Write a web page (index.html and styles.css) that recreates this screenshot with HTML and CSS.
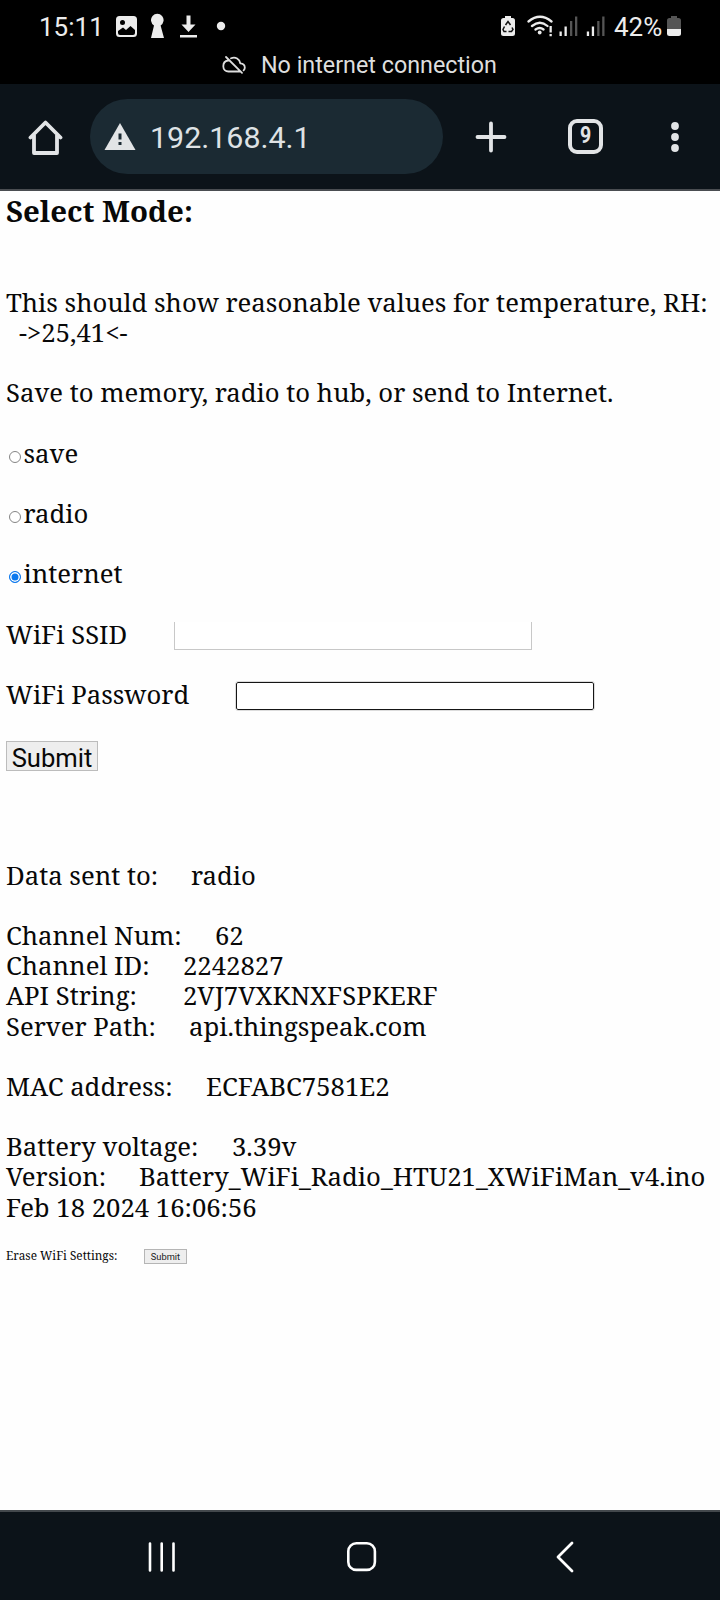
FILE: index.html
```html
<!DOCTYPE html>
<html lang="en">
<head>
<meta charset="utf-8">
<title>Select Mode</title>
<link rel="stylesheet" href="styles.css">
</head>
<body>
<header class="status">
  <div class="status-row">
    <span class="clock">15:11</span>
    <svg class="ic-left" width="112" height="30" viewBox="114 11 112 30" fill="#ececec">
      <path fill-rule="evenodd" d="M119.500 16h14a3.500 3.500 0 0 1 3.500 3.500v14a3.500 3.500 0 0 1-3.500 3.500h-14a3.500 3.500 0 0 1-3.500-3.500v-14a3.500 3.500 0 0 1 3.500-3.500zM118 31v2q0 2 2 2h13q2 0 2-2v-3l-4.500-4-4.500 4-3-2.500z"/>
      <circle cx="122.500" cy="22.500" r="2.500" fill="#000"/>
      <path d="M154 25.500a6.300 6.300 0 1 1 6.600 0L164 38h-13z"/>
      <path d="M186.500 15.500h4v9h5L188.500 32l-7-7.500h5zM180 35h17v2.600h-17z"/>
      <circle cx="221" cy="26" r="4.200"/>
    </svg>
    <svg class="ic-right" width="106" height="30" viewBox="500 11 106 30" fill="#ececec">
      <path d="M505 18v-2h6v2h1.500q2.500 0 2.500 2.500v13q0 2.500-2.500 2.500h-9q-2.500 0-2.500-2.500v-13q0-2.500 2.500-2.500z"/>
      <path d="M505.500 25l2.500-3.500 2.500 3.500M512 27.500l1 2-1.500 2h-3M506.500 31.500H504l-1-2 1.500-3" fill="none" stroke="#111" stroke-width="1.500"/>
      <g fill="none" stroke="#ececec" stroke-width="2.300" stroke-linecap="round">
        <path d="M528.500 21.500q11.500-9.500 23 0M532 26q8-6.500 15.500 0M535.500 29.500q4.300-3 8 0"/>
      </g>
      <circle cx="539.700" cy="32.500" r="1.900"/>
      <path d="M549.500 26h2.300v6.500h-2.300zM549.500 34h2.300v2.300h-2.300zM559.500 31.500h2.300V36h-2.300zM564.500 26.500h2.300V36h-2.300zM586.800 31.500h2.300V36h-2.300zM591.800 26.500h2.300V36h-2.300z"/>
      <path fill="#555" d="M570 21h2.300v15H570zM575 16.500h2.300V36H575zM597.200 21h2.300v15h-2.300zM602.200 16.500h2.300V36h-2.300z"/>
    </svg>
    <span class="percent">42%</span>
    <svg class="ic-batt" width="14" height="30" viewBox="667 11 14 30">
      <path fill="#555" d="M671 18v-2h6v2h1.500q2.500 0 2.500 2.500V29h-14v-8.500q0-2.500 2.500-2.500z"/>
      <path fill="#ececec" d="M667 29h14v4.500q0 2.500-2.500 2.500h-9q-2.500 0-2.500-2.500z"/>
    </svg>
  </div>
  <div class="offline">
    <svg width="24" height="20" viewBox="0 0 24 20" fill="none" stroke="#dedede" stroke-width="1.800" stroke-linecap="round" stroke-linejoin="round">
      <path d="M6 5.500C3 6 1.300 8.300 1.300 11.200 1.300 14.500 3.600 16.500 6.500 16.500h11.200M9 3.300c4.500-2 8.700.8 9.300 5 3 .2 4.500 2 4.500 4.400 0 1-.5 2-1.200 2.700M4 2l16 15.800"/>
    </svg>
    <span class="offline-text">No internet connection</span>
  </div>
</header>
<nav class="toolbar">
  <svg class="home" width="36" height="38" viewBox="27 117 36 38" fill="none" stroke="#e2e4e6" stroke-width="3.800" stroke-linejoin="round" stroke-linecap="round">
    <path d="M30.500 136.500L45.500 121.500l15 15M34 134v18h23v-18"/>
  </svg>
  <div class="address">
    <svg width="32" height="28" viewBox="0 0 32 28"><path fill="#e2e4e6" d="M16 0l15.500 27H.5z"/><path fill="#1b2a33" d="M14.500 10.500h3v6h-3zM14.500 19h3v3h-3z"/></svg>
    <span class="url">192.168.4.1</span>
  </div>
  <svg class="plus" width="32" height="32" viewBox="0 0 32 32" stroke="#e2e4e6" stroke-width="3.800" stroke-linecap="round"><path d="M16 2.500v27M2.500 16h27"/></svg>
  <div class="tabs"><span class="count">9</span></div>
  <svg class="more" width="10" height="34" viewBox="0 0 10 34" fill="#e2e4e6"><circle cx="5" cy="6" r="3.900"/><circle cx="5" cy="17" r="3.900"/><circle cx="5" cy="28" r="3.900"/></svg>
</nav>
<main class="page">
  <h1 class="title">Select Mode:</h1>
  <div class="lines">
    <div class="row"><span>This should show reasonable values for temperature, RH:</span></div>
    <div class="row reading"><span>-&gt;25,41&lt;-</span></div>
    <div class="row"></div>
    <div class="row"><span>Save to memory, radio to hub, or send to Internet.</span></div>
    <div class="row"></div>
    <label class="row"><i class="radio"></i><span>save</span></label>
    <div class="row"></div>
    <label class="row"><i class="radio"></i><span>radio</span></label>
    <div class="row"></div>
    <label class="row"><i class="radio on"></i><span>internet</span></label>
    <div class="row"></div>
    <label class="row"><span class="label w-ssid">WiFi SSID</span><i class="field open"></i></label>
    <div class="row"></div>
    <label class="row"><span class="label w-pass">WiFi Password</span><i class="field focus"></i></label>
    <div class="row"></div>
    <div class="row"><button class="submit">Submit</button></div>
    <div class="row"></div>
    <div class="row"></div>
    <div class="row"></div>
    <div class="row"><span class="label w-sent">Data sent to:</span><span>radio</span></div>
    <div class="row"></div>
    <div class="row"><span class="label w-num">Channel Num:</span><span>62</span></div>
    <div class="row"><span class="label w-id">Channel ID:</span><span>2242827</span></div>
    <div class="row"><span class="label w-api">API String:</span><span>2VJ7VXKNXFSPKERF</span></div>
    <div class="row"><span class="label w-path">Server Path:</span><span>api.thingspeak.com</span></div>
    <div class="row"></div>
    <div class="row"><span class="label w-mac">MAC address:</span><span>ECFABC7581E2</span></div>
    <div class="row"></div>
    <div class="row"><span class="label w-volt">Battery voltage:</span><span>3.39v</span></div>
    <div class="row"><span class="label w-ver">Version:</span><span>Battery_WiFi_Radio_HTU21_XWiFiMan_v4.ino</span></div>
    <div class="row"><span>Feb 18 2024 16:06:56</span></div>
  </div>
  <div class="erase"><span class="label w-erase">Erase WiFi Settings:</span><button class="submit small">Submit</button></div>
</main>
<footer class="navbar">
  <svg width="30" height="32" viewBox="0 0 30 32" stroke="#fff" stroke-width="2.600" stroke-linecap="round"><path d="M3 2.500v27M14.700 2.500v27M26.500 2.500v27"/></svg>
  <svg width="32" height="32" viewBox="0 0 32 32" fill="none" stroke="#fff" stroke-width="2.600"><rect x="2.300" y="2.300" width="26.600" height="26.600" rx="8"/></svg>
  <svg width="20" height="34" viewBox="0 0 20 34" fill="none" stroke="#fff" stroke-width="2.800" stroke-linecap="round" stroke-linejoin="round"><path d="M17 3L3 17l14 14"/></svg>
</footer>
</body>
</html>
```
FILE: styles.css
```css
* { box-sizing: border-box; }
body { margin: 0; width: 720px; height: 1600px; display: flex; flex-direction: column; background: #fefefe; font-family: "Noto Serif", "DejaVu Serif Condensed", serif; color: #080808; overflow: hidden; }
svg { display: block; flex: none; }
span { white-space: pre; }
.status { height: 84px; background: #000; color: #ececec; font-family: Roboto, sans-serif; }
.status-row { display: flex; align-items: center; height: 52px; padding-left: 39px; }
.clock { width: 75px; padding-top: 2px; font-size: 26px; }
.ic-right { margin-left: 274px; }
.percent { width: 53px; margin-left: 8px; padding-top: 2px; font-size: 26px; }
.offline { display: flex; align-items: center; height: 26px; padding-left: 222px; gap: 15px; font-size: 23.3px; color: #dedede; }
.toolbar { height: 107px; display: flex; align-items: center; padding: 0 38px 0 27px; background: #0c1319; border-bottom: 2px solid #4a4d51; }
.address { display: flex; align-items: center; width: 353px; height: 75px; margin-left: 27px; padding-left: 14px; gap: 14px; border-radius: 38px; background: #1b2a33; font-family: Roboto, sans-serif; font-size: 30.4px; color: #dfe2e5; }
.url { padding-top: 2px; }
.plus { margin-left: 32px; }
.tabs { display: flex; justify-content: center; width: 35px; height: 35px; margin-left: 61px; border: 4px solid #e2e4e6; border-radius: 9px; font: bold 23px/26px Roboto, sans-serif; color: #e2e4e6; }
.count { transform: scaleX(0.85); }
.more { margin-left: 67px; }
.page { height: 1319px; padding-left: 6px; font-size: 25.7px; }
.title { height: 97px; margin: 0; font-size: 29.4px; line-height: 40px; }
.row { display: flex; align-items: center; height: 30.16px; line-height: 30.16px; }
.row span { padding-bottom: 0.3px; }
.reading { padding-left: 13px; }
.radio { flex: none; width: 12px; height: 12px; margin: 6px 2.500px 0 3px; border: 1px solid #858585; border-radius: 50%; background: #fff; }
.on { border-color: #0b78ee; background: #0b78ee; box-shadow: inset 0 0 0 1.5px #fff; }
.label { flex: none; }
.w-ssid { width: 168px; }
.w-pass { width: 230px; }
.field { width: 358px; height: 28px; margin-top: 2px; border: 1px solid #c8c8c8; background: #fff; }
.open { border-top: 0; }
.focus { border: 1px solid #151515; outline: 1px solid #dcdcdc; border-radius: 2px; }
.submit { width: 92px; height: 30px; margin-top: 2px; padding: 2px 0 0; border: 1px solid #bcbcbc; border-radius: 0; background: #eee; color: #080808; font: 25.6px/28px Roboto, sans-serif; }
.w-sent { width: 185px; }
.w-num { width: 209px; }
.w-id { width: 177px; }
.w-api { width: 177px; }
.w-path { width: 183px; }
.w-mac { width: 200px; }
.w-volt { width: 226px; }
.w-ver { width: 133px; }
.erase { display: flex; align-items: center; height: 16px; margin-top: 25px; font-size: 11.8px; line-height: 14px; }
.w-erase { width: 138px; padding-bottom: 2px; }
.small { width: 43px; height: 15px; padding-top: 0; border-color: #b5b5b5; font-size: 9.3px; line-height: 13px; color: #222; }
.navbar { height: 90px; display: flex; align-items: center; border-top: 2px solid #43484c; background: #0c1319; padding: 1px 0 0 147px; }
.navbar svg:nth-child(2) { margin-left: 169px; }
.navbar svg:nth-child(3) { margin-left: 177px; }
```
